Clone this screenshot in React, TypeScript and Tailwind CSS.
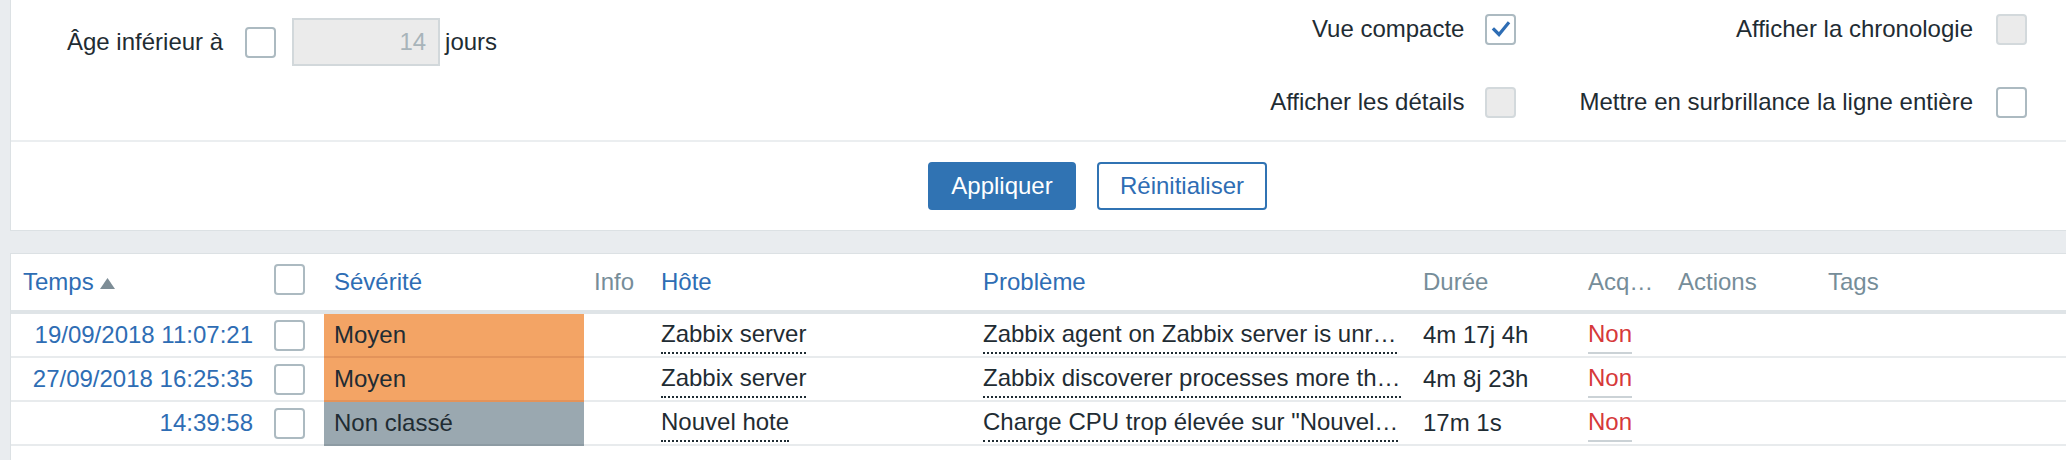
import React from "react";

type CbVariant = "normal" | "disabled" | "checked";

function Checkbox({ variant = "normal", className = "" }: { variant?: CbVariant; className?: string }) {
  const base = "box-border h-[31px] w-[31px] shrink-0 rounded-[4px] border-2 flex items-center justify-center";
  const look =
    variant === "disabled"
      ? "bg-[#ebebeb] border-[#d3d9dc]"
      : "bg-white border-[#acbac1]";
  return (
    <div className={`${base} ${look} ${className}`}>
      {variant === "checked" && (
        <svg width="20" height="18" viewBox="0 0 20 18">
          <path d="M3 9.5 L8 14.5 L17 3.5" fill="none" stroke="#2e6db4" strokeWidth="3.2" strokeLinecap="square" strokeLinejoin="miter" />
        </svg>
      )}
    </div>
  );
}

const cols = "grid grid-cols-[252px_61px_260px_67px_322px_440px_165px_90px_150px_1fr]";

type Row = {
  time: string;
  sev: string;
  sevBg: string;
  sevBorder: string;
  host: string;
  problem: string;
  duration: string;
};

const rows: Row[] = [
  {
    time: "19/09/2018 11:07:21",
    sev: "Moyen",
    sevBg: "bg-[#f3a465]",
    sevBorder: "border-[#e3935a]",
    host: "Zabbix server",
    problem: "Zabbix agent on Zabbix server is unr…",
    duration: "4m 17j 4h",
  },
  {
    time: "27/09/2018 16:25:35",
    sev: "Moyen",
    sevBg: "bg-[#f3a465]",
    sevBorder: "border-[#e3935a]",
    host: "Zabbix server",
    problem: "Zabbix discoverer processes more th…",
    duration: "4m 8j 23h",
  },
  {
    time: "14:39:58",
    sev: "Non classé",
    sevBg: "bg-[#9aa8b0]",
    sevBorder: "border-[#8d9ba3]",
    host: "Nouvel hote",
    problem: "Charge CPU trop élevée sur \"Nouvel…",
    duration: "17m 1s",
  },
];

export default function App() {
  const cellB = "border-b-2 border-[#e8ebed] flex items-center pl-[10px] min-w-0";
  const headB = "border-b-4 border-[#dfe4e7] flex items-center pl-[10px] min-w-0";
  return (
    <div className="min-h-screen w-[2066px] overflow-hidden bg-[#e9ecef] font-['Liberation_Sans',Arial,sans-serif] text-[24px] leading-normal text-[#1f2c33]">
      {/* Filter panel */}
      <div className="ml-[10px] border-b border-l border-[#dce1e4] bg-white">
        <div className="flex h-[140px] items-start">
          <div className="mt-[18px] flex items-center pl-[56px]">
            <span className="whitespace-nowrap">Âge inférieur à</span>
            <Checkbox className="ml-[22px]" />
            <div className="ml-[16px] box-border flex h-[48px] w-[148px] items-center justify-end border-2 border-[#d2d8db] bg-[#ebebeb] pr-[12px] text-[#a8b4ba]">
              14
            </div>
            <span className="ml-[5px]">jours</span>
          </div>
          <div className="ml-auto mr-[39px] mt-[11px] flex gap-x-[63px]">
            <div className="grid grid-cols-[auto_31px] items-center justify-items-end gap-x-[21px] gap-y-[37px]">
              <span className="whitespace-nowrap">Vue compacte</span>
              <Checkbox variant="checked" />
              <span className="whitespace-nowrap">Afficher les détails</span>
              <Checkbox variant="disabled" />
            </div>
            <div className="grid grid-cols-[auto_31px] items-center justify-items-end gap-x-[23px] gap-y-[37px]">
              <span className="whitespace-nowrap">Afficher la chronologie</span>
              <Checkbox variant="disabled" />
              <span className="whitespace-nowrap">Mettre en surbrillance la ligne entière</span>
              <Checkbox />
            </div>
          </div>
        </div>
        <div className="box-border flex h-[90px] items-center gap-[21px] border-t-2 border-[#ebeef0] pl-[917px]">
          <button className="box-border flex h-[48px] w-[148px] items-center justify-center rounded-[4px] border-2 border-[#3073b3] bg-[#3073b3] text-white">
            Appliquer
          </button>
          <button className="box-border flex h-[48px] w-[170px] items-center justify-center rounded-[4px] border-2 border-[#3073b3] bg-white text-[#2e6db4]">
            Réinitialiser
          </button>
        </div>
      </div>

      {/* Table panel */}
      <div className="ml-[10px] mt-[22px] border-l border-t border-[#dce1e4] bg-white">
        <div className={`${cols} box-border h-[60px] whitespace-nowrap`}>
          <div className={`${headB} pl-[12px] text-[#2e6db4]`}>
            <span>Temps</span>
            <svg className="ml-[6px] mt-[2px]" width="15" height="11" viewBox="0 0 15 11">
              <polygon points="7.5,0 15,11 0,11" fill="#7d8d96" />
            </svg>
          </div>
          <div className={`${headB} pl-[11px]`}>
            <Checkbox className="-mt-[5px]" />
          </div>
          <div className={`${headB} text-[#2e6db4]`}>Sévérité</div>
          <div className={`${headB} text-[#768d99]`}>Info</div>
          <div className={`${headB} text-[#2e6db4]`}>Hôte</div>
          <div className={`${headB} text-[#2e6db4]`}>Problème</div>
          <div className={`${headB} text-[#768d99]`}>Durée</div>
          <div className={`${headB} text-[#768d99]`}>Acq…</div>
          <div className={`${headB} text-[#768d99]`}>Actions</div>
          <div className={`${headB} text-[#768d99]`}>Tags</div>
        </div>
        {rows.map((r, i) => (
          <div key={i} className={`${cols} box-border h-[44px] whitespace-nowrap`}>
            <div className={`${cellB} justify-end pr-[10px] text-[#2e6db4]`}>{r.time}</div>
            <div className={`${cellB} pl-[11px]`}>
              <Checkbox />
            </div>
            <div className={`border-b-2 ${r.sevBorder} ${r.sevBg} flex items-center pl-[10px]`}>{r.sev}</div>
            <div className={cellB}></div>
            <div className={cellB}>
              <span className="border-b-2 border-dotted border-[#1f2c33]">{r.host}</span>
            </div>
            <div className={cellB}>
              <span className="border-b-2 border-dotted border-[#1f2c33]">{r.problem}</span>
            </div>
            <div className={cellB}>{r.duration}</div>
            <div className={cellB}>
              <span className="border-b-2 border-[#cbd2d6] text-[#d6393a]">Non</span>
            </div>
            <div className={cellB}></div>
            <div className={cellB}></div>
          </div>
        ))}
        <div className="h-[20px]"></div>
      </div>
    </div>
  );
}
